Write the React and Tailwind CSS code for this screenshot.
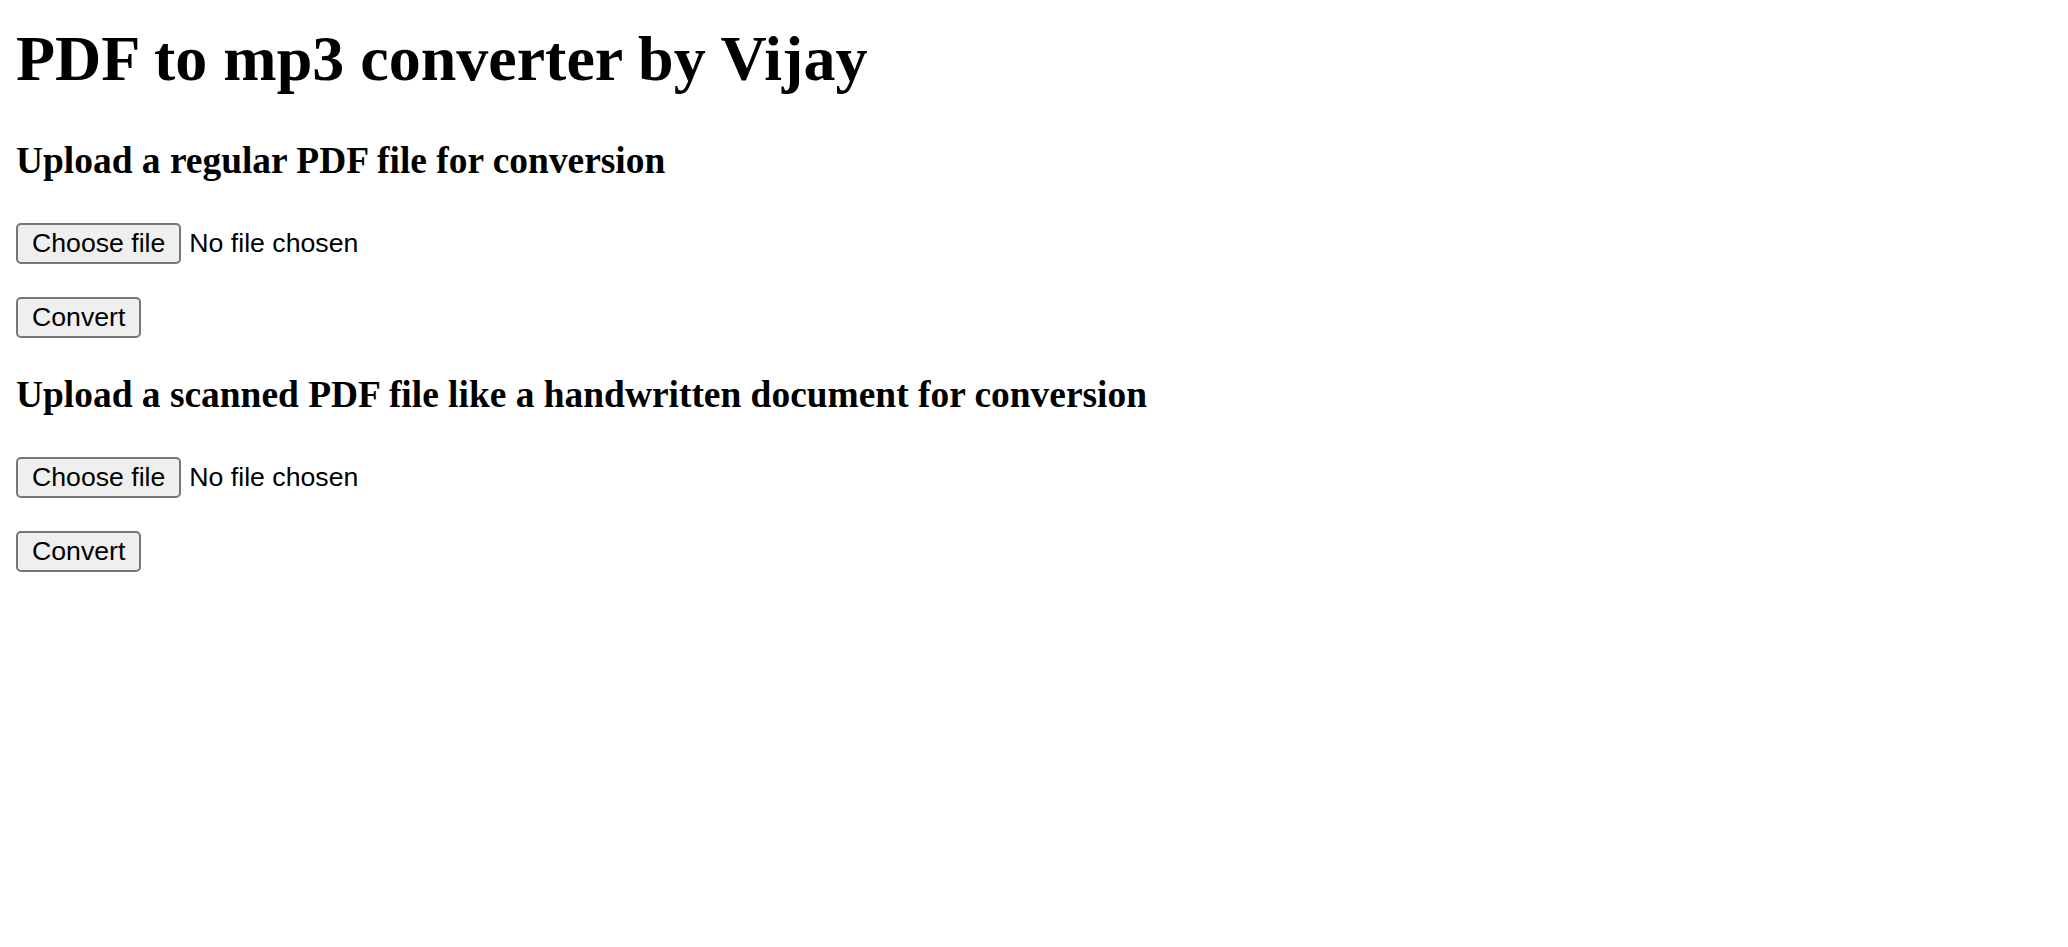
import { useState } from "react";

function FilePicker({ file, onChange }) {
  return (
    <label className="mt-[41px] flex items-center cursor-pointer">
      <input
        type="file"
        accept="application/pdf"
        className="hidden"
        onChange={(e) => onChange(e.target.files[0] || null)}
      />
      <span className="h-[41px] px-[14px] flex items-center bg-[#efefef] border-2 border-[#767676] rounded-[5px] text-black text-[26.67px] leading-none">
        Choose file
      </span>
      <span className="ml-[8px] text-black text-[26.67px] leading-none">
        {file ? file.name : "No file chosen"}
      </span>
    </label>
  );
}

function ConvertButton({ onClick }) {
  return (
    <button
      type="button"
      onClick={onClick}
      className="mt-[33px] h-[41px] px-[14px] flex items-center bg-[#efefef] border-2 border-[#767676] rounded-[5px] text-black text-[26.67px] leading-none cursor-pointer"
    >
      Convert
    </button>
  );
}

export default function App() {
  const [regularFile, setRegularFile] = useState(null);
  const [scannedFile, setScannedFile] = useState(null);

  const convert = (file) => {
    if (!file) return;
    console.log("converting", file.name);
  };

  return (
    <div className="min-h-screen bg-white px-[16px] font-['Liberation_Sans',Arial,sans-serif]">
      <h1 className="mt-[22px] text-[64px] leading-[74px] font-bold text-black font-['Liberation_Serif','Times_New_Roman',serif]">
        PDF to mp3 converter by Vijay
      </h1>

      <h3 className="mt-[43px] text-[37.44px] leading-[43px] font-bold text-black font-['Liberation_Serif','Times_New_Roman',serif]">
        Upload a regular PDF file for conversion
      </h3>
      <FilePicker file={regularFile} onChange={setRegularFile} />
      <ConvertButton onClick={() => convert(regularFile)} />

      <h3 className="mt-[35px] text-[37.44px] leading-[43px] font-bold text-black font-['Liberation_Serif','Times_New_Roman',serif]">
        Upload a scanned PDF file like a handwritten document for conversion
      </h3>
      <FilePicker file={scannedFile} onChange={setScannedFile} />
      <ConvertButton onClick={() => convert(scannedFile)} />
    </div>
  );
}
